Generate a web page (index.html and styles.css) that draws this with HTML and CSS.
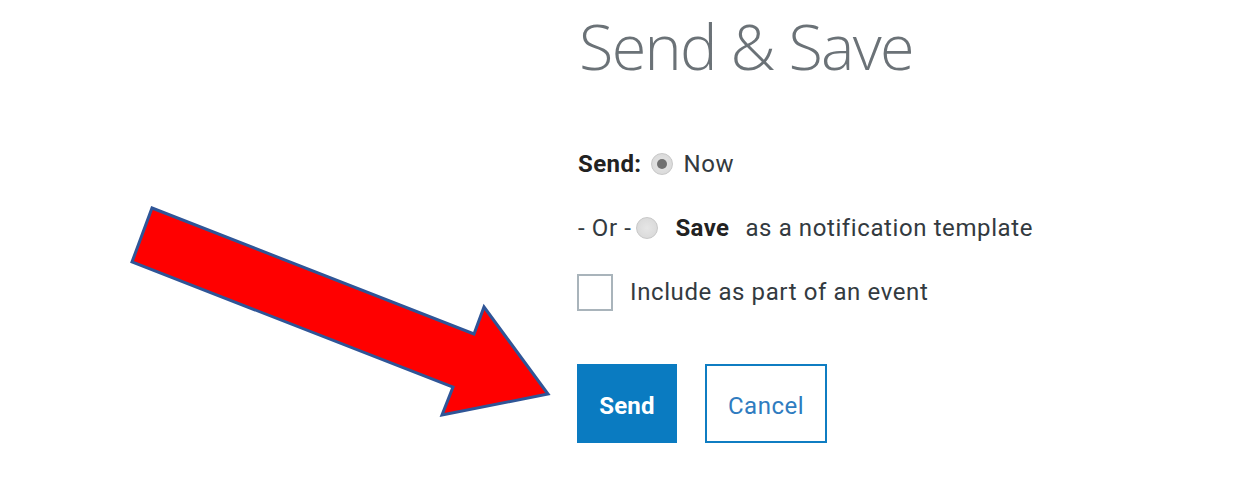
FILE: index.html
```html
<!DOCTYPE html>
<html lang="en">
<head>
<meta charset="utf-8">
<title>Send &amp; Save</title>
<link rel="stylesheet" href="styles.css">
</head>
<body>
<div class="page">
  <section class="panel">
    <h1 class="title">Send &amp; Save</h1>
    <div class="row row-send">
      <span class="bold">Send:</span>
      <span class="radio radio-on"></span>
      <span class="label">Now</span>
    </div>
    <div class="row row-save">
      <span class="label">- Or -</span>
      <span class="radio"></span>
      <span class="bold save">Save</span>
      <span class="label">as a notification template</span>
    </div>
    <div class="row row-event">
      <span class="checkbox"></span>
      <span class="label">Include as part of an event</span>
    </div>
    <div class="actions">
      <button class="btn btn-primary">Send</button>
      <button class="btn btn-secondary">Cancel</button>
    </div>
  </section>
  <svg class="arrow" width="1240" height="489" viewBox="0 0 1240 489">
    <polygon points="152,208 474,334 484,307 548,394 442,415 453,387 132,262" fill="#ff0000" stroke="#2f5597" stroke-width="3" stroke-linejoin="miter"/>
  </svg>
</div>
</body>
</html>
```
FILE: styles.css
```css
html, body {
  margin: 0;
  padding: 0;
  background: #ffffff;
}
.page {
  position: relative;
  width: 1240px;
  height: 489px;
  overflow: hidden;
}
.panel {
  padding-left: 577px;
  padding-top: 6px;
  display: flex;
  flex-direction: column;
  font-family: Roboto, "Liberation Sans", sans-serif;
  font-size: 24px;
  letter-spacing: 0.6px;
  color: #333a40;
}
.title {
  margin: 0;
  font-family: "Open Sans", sans-serif;
  font-weight: 300;
  font-size: 63px;
  line-height: 80px;
  color: #6b7277;
  letter-spacing: -1.7px;
  padding-left: 2px;
}
.row {
  display: flex;
  align-items: center;
  height: 40px;
}
.row-send { margin-top: 58px; gap: 10px; padding-left: 1px; }
.row-save { margin-top: 24px; gap: 5px; padding-left: 1px; }
.row-event { margin-top: 24px; gap: 17px; }
.bold { font-weight: 700; color: #222; letter-spacing: 0.4px; }
.save { margin-left: 12px; margin-right: 11px; }
.label { color: #333a40; }
.radio {
  width: 22px;
  height: 22px;
  border-radius: 50%;
  border: 1px solid #c8c8c8;
  background: radial-gradient(circle, #e6e6e6 0, #d6d6d6 100%);
  box-sizing: border-box;
  position: relative;
  flex: none;
}
.radio-on::after {
  content: "";
  position: absolute;
  left: 5px;
  top: 5px;
  width: 10px;
  height: 10px;
  border-radius: 50%;
  background: #707070;
}
.checkbox {
  width: 36px;
  height: 37px;
  border: 2px solid #a9b4bb;
  box-sizing: border-box;
  flex: none;
}
.actions {
  display: flex;
  gap: 28px;
  margin-top: 52px;
}
.btn {
  font-family: Roboto, "Liberation Sans", sans-serif;
  font-size: 24px;
  height: 79px;
  box-sizing: border-box;
  padding: 4px 0 0;
  cursor: pointer;
}
.btn-primary {
  width: 100px;
  background: #0a7bc1;
  color: #ffffff;
  border: none;
  font-weight: 700;
  letter-spacing: 0.2px;
}
.btn-secondary {
  width: 122px;
  background: #ffffff;
  color: #2f7cc0;
  border: 2px solid #0f7dc2;
  letter-spacing: 0.5px;
}
.arrow {
  position: absolute;
  left: 0;
  top: 0;
  pointer-events: none;
}
```
